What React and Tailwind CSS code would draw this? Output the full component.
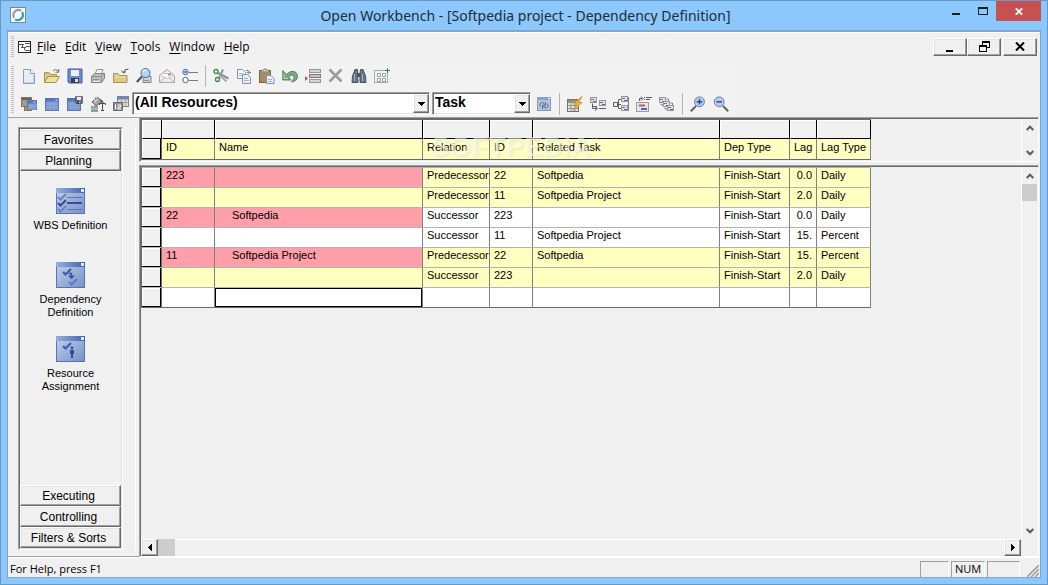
const COLS = ["w-[20px]", "w-[53px]", "w-[208px]", "w-[67px]", "w-[43px]", "w-[187px]", "w-[70px]", "w-[27px]", "w-[54px]"];
const HEADERS = ["ID", "Name", "Relation", "ID", "Related Task", "Dep Type", "Lag", "Lag Type"];

const ROWS = [
  { id: "223", name: "", head: true, band: true, rel: "Predecessor", relId: "22", task: "Softpedia", dep: "Finish-Start", lag: "0.0", type: "Daily" },
  { id: "", name: "", band: true, rel: "Predecessor", relId: "11", task: "Softpedia Project", dep: "Finish-Start", lag: "2.0", type: "Daily" },
  { id: "22", name: "Softpedia", head: true, rel: "Successor", relId: "223", task: "", dep: "Finish-Start", lag: "0.0", type: "Daily" },
  { id: "", name: "", rel: "Successor", relId: "11", task: "Softpedia Project", dep: "Finish-Start", lag: "15.", type: "Percent" },
  { id: "11", name: "Softpedia Project", head: true, band: true, rel: "Predecessor", relId: "22", task: "Softpedia", dep: "Finish-Start", lag: "15.", type: "Percent" },
  { id: "", name: "", band: true, rel: "Successor", relId: "223", task: "", dep: "Finish-Start", lag: "2.0", type: "Daily" },
  { id: "", name: "", last: true, rel: "", relId: "", task: "", dep: "", lag: "", type: "" },
];

const MENUS = ["File", "Edit", "View", "Tools", "Window", "Help"];

const RAISED = "border border-t-white border-l-white border-r-[#696969] border-b-[#696969] shadow-[inset_-1px_-1px_0_#a0a0a0,inset_1px_1px_0_#e3e3e3] bg-[#f0f0f0]";

/* ---------- toolbar icons ---------- */

function Svg({ children }) {
  return (
    <svg viewBox="0 0 16 16" className="block h-4 w-4" fill="none" aria-hidden="true">
      {children}
    </svg>
  );
}

const MiniWindow = ({ x = 1, y = 2, w = 14, h = 12, fill = "#7c98d2", bar = "#5475ba" }) => (
  <g>
    <rect x={x} y={y} width={w} height={h} fill={fill} stroke="#5c79b4" strokeWidth="1" />
    <rect x={x} y={y} width={w} height="3" fill={bar} />
    <rect x={x + w - 3} y={y + 1} width="2" height="1" fill="#e4ecfa" />
    <path
      d={`M${x + 1} ${y + 5.5}H${x + w - 1}M${x + 1} ${y + 8.5}H${x + w - 1}M${x + 4.5} ${y + 3}V${y + h - 1}M${x + 8.5} ${y + 3}V${y + h - 1}`}
      stroke="#93abdc"
    />
  </g>
);

const Floppy = ({ x, y, s, a, b }) => (
  <g transform={`translate(${x} ${y}) scale(${s})`}>
    <path d="M0 0H14V14H1L0 13Z" fill={a} stroke={b} />
    <rect x="3" y="1" width="8" height="6" fill="#e8eefa" />
    <rect x="3" y="9" width="8" height="5" fill="#3e3e46" />
    <rect x="7" y="10" width="3" height="3" fill="#dde" />
  </g>
);

const Task = ({ x, y }) => (
  <g>
    <rect x={x + 0.5} y={y + 0.5} width="6" height="5" fill="#dfe3ea" stroke="#9298a2" />
    <path d={`M${x + 1} ${y + 2.5}H${x + 4}`} stroke="#c9505c" />
    <path d={`M${x + 3} ${y + 4.5}H${x + 6}`} stroke="#4c6ab8" />
  </g>
);

const ICONS = {
  new: (
    <>
      <path d="M2.5 1.5H9.5L13.5 5.5V15.5H2.5Z" fill="#e6eefa" stroke="#8e9cb6" />
      <path d="M9.5 1.5V5.5H13.5" fill="#fff" stroke="#8e9cb6" />
      <path d="M12.5 7V14.5H4" stroke="#c3d0e8" />
    </>
  ),
  open: (
    <>
      <path d="M0.5 14.5V4.5H5L6.5 6.5H12.5V9" fill="#d8c884" stroke="#a8954c" />
      <path d="M0.5 14.5L4 8.5H15.5L12 14.5Z" fill="#efe0a0" stroke="#a8954c" />
      <path d="M9 3Q12 0 14 3.5M14.7 1V4.2H11.5" stroke="#64704c" />
    </>
  ),
  save: <Floppy x={1} y={1} s={1} a="#6c8cca" b="#44609c" />,
  print: (
    <>
      <path d="M5 6L7 1.5H13L11.5 6" fill="#fafafa" stroke="#8d9298" />
      <path d="M1.5 8.5L4.5 5.5H14.5V10.5L11.5 14.5H1.5Z" fill="#b9bdc0" stroke="#7c8184" />
      <path d="M1.5 8.5H11.5V14.5M11.5 8.5L14.5 5.5" stroke="#8a8f92" />
      <path d="M3 11.5H9" stroke="#6cab6c" />
      <path d="M3 13.5H10M7.5 3.5H11" stroke="#ebeef0" />
    </>
  ),
  folderUp: (
    <>
      <path d="M0.5 14.5V5.5H5L6.5 7.5H14V14.5Z" fill="#dccb84" stroke="#a8954c" />
      <path d="M2 9H13" stroke="#f1e5b4" />
      <path d="M15.5 1Q11 1 10.5 4.5M8.5 2.5L10.5 5L13 3.5" stroke="#4e5c38" />
    </>
  ),
  preview: (
    <>
      <path d="M7 11L9 8.5H15V14.5H7Z" fill="#cfd4d2" stroke="#7e8583" />
      <circle cx="9.5" cy="5" r="4.5" fill="#b9d2f6" stroke="#4a67a6" />
      <path d="M6.5 4Q7.5 2 10 2" stroke="#fff" strokeWidth="1.4" />
      <path d="M6 8.5L0.8 14" stroke="#4c4c50" strokeWidth="2" />
      <path d="M8 12.5H13" stroke="#6cab6c" />
    </>
  ),
  mail: (
    <>
      <path d="M0.5 7.5L8 1.5L15.5 7.5V14.5H0.5Z" fill="#eceeec" stroke="#a6aaa8" />
      <path d="M2.5 8V5.5H13.5V8L8 10.5Z" fill="#fff" stroke="#c3c6c4" />
      <path d="M0.5 14.5L6 10M15.5 14.5L10 10" stroke="#b4b8b6" />
      <rect x="9" y="6" width="3" height="1.5" fill="#cf7478" />
    </>
  ),
  options: (
    <>
      <circle cx="3.5" cy="4" r="2.7" fill="#e2eaf8" stroke="#49619a" />
      <circle cx="3.5" cy="4" r="1.2" fill="#49619a" />
      <circle cx="3.5" cy="12" r="2.7" fill="#fff" stroke="#49619a" />
      <path d="M7 4.5H16M7 12.5H16" stroke="#7c7c7c" />
    </>
  ),
  cut: (
    <>
      <path d="M5 5L15.5 10.5M6 10L10 1.5" stroke="#8c9196" strokeWidth="2" />
      <path d="M7 7.5L13.5 13.5" stroke="#a4a9ae" strokeWidth="2" />
      <circle cx="3" cy="3.5" r="2" stroke="#3f8a50" strokeWidth="1.4" />
      <circle cx="4.5" cy="11.5" r="2" stroke="#3f8a50" strokeWidth="1.4" />
    </>
  ),
  copy: (
    <>
      <path d="M1.5 1.5H6.5L9.5 4.5V10.5H1.5Z" fill="#f2f6fc" stroke="#8794ae" />
      <path d="M6.5 6.5H11.5L14.5 9.5V15.5H6.5Z" fill="#e7eefa" stroke="#8794ae" />
      <path d="M3 5.5H7M3 7.5H6M8 10.5H12M8 12.5H13" stroke="#a8b5cf" />
      <path d="M10 2.5Q13 1.5 13 5M11 4L13 5.5L15 4" stroke="#6a7078" />
    </>
  ),
  paste: (
    <>
      <rect x="0.5" y="2.5" width="11" height="12" fill="#a98c5a" stroke="#7d6640" />
      <path d="M3 4V2H4.5L5.5 0.8H7L8 2H9.5V4Z" fill="#c9ccd0" stroke="#84878a" />
      <path d="M7.5 7.5H12L15 10.5V15.5H7.5Z" fill="#eaf0fa" stroke="#8190ae" />
      <path d="M9 11.5H13M9 13.5H13" stroke="#9cb0d6" />
    </>
  ),
  undo: (
    <>
      <path d="M0.8 2.5V12H9L6.5 9Q10 5.5 12 8Q13 10 9.5 14Q15.5 13 15.5 8Q14.5 2.5 9 3.5Q6 4.5 4.5 6.5Z" fill="#77a983" stroke="#4d7b5a" strokeWidth="0.9" />
      <path d="M2 5.5V10.5H6" stroke="#b5d6bc" />
    </>
  ),
  insertRow: (
    <>
      <rect x="4.5" y="1.5" width="11" height="3" fill="#d4d4d4" stroke="#969696" />
      <rect x="4.5" y="6.5" width="11" height="3" fill="#c4c4c4" stroke="#7c7c7c" />
      <rect x="4.5" y="11.5" width="11" height="3" fill="#d4d4d4" stroke="#969696" />
      <path d="M0 8L3.2 10.5L0 13Z" fill="#c05a66" />
    </>
  ),
  remove: <path d="M1.5 1.5L13.5 13.5M13.5 1.5L1.5 13.5" stroke="#9c9c9c" strokeWidth="2.8" />,
  find: (
    <>
      <path d="M4 1.5H6.5V5L7 14.5H1L1.5 8Z" fill="#66748a" stroke="#4a5666" />
      <path d="M9.5 1.5H12L14.5 8L15 14.5H9V5Z" fill="#66748a" stroke="#4a5666" />
      <rect x="6.5" y="5" width="3" height="4" fill="#4a5566" />
      <path d="M3.5 6V13M11.5 6V13" stroke="#a6b2c4" />
    </>
  ),
  select: (
    <>
      <rect x="0.5" y="2.5" width="13" height="12" stroke="#3e7a4a" strokeDasharray="1 1" />
      <path d="M3.5 5.5H6.5V8.5H3.5ZM8.5 5.5H11.5V8.5H8.5ZM3.5 10.5H6.5V13.5H3.5ZM8.5 10.5H11.5V13.5H8.5Z" fill="#fff" stroke="#9a9f9a" />
      <path d="M13.5 0V5M11 2.5H16" stroke="#3e7a4a" />
    </>
  ),
  windows: (
    <>
      <rect x="0.5" y="1.5" width="10" height="9" fill="#a09a8e" stroke="#7c766a" />
      <path d="M1 3H10" stroke="#6a655c" strokeWidth="2" />
      <rect x="3.5" y="10.5" width="7" height="4" fill="#b09860" stroke="#86734a" />
      <MiniWindow x={6.5} y={4.5} w={9} h={9} />
    </>
  ),
  view: <MiniWindow x={1.5} y={2.5} w={13} h={12} />,
  saveView: (
    <>
      <MiniWindow x={0.5} y={2.5} w={13} h={12} />
      <Floppy x={8.5} y={0.5} s={0.5} a="#6c6c70" b="#3c3c40" />
    </>
  ),
  format: (
    <>
      <path d="M2 6L7 1L12 5L6 10Z" fill="#a4a7aa" stroke="#5c5c5e" />
      <path d="M5 5Q3 0 7.5 1.5M3.5 7L8 3" stroke="#dcdcdc" />
      <path d="M11 4L13 7" stroke="#4c4c4e" strokeWidth="1.5" />
      <path d="M1 11H8" stroke="#c84c50" strokeWidth="1.3" />
      <path d="M1 13H8" stroke="#58a860" strokeWidth="1.3" />
      <path d="M1 15H8" stroke="#4c6ab8" strokeWidth="1.3" />
      <path d="M9.5 9V7.5H15.5V9M12.5 7.5V14.5M11 14.5H14" stroke="#48484a" />
    </>
  ),
  calendar: (
    <>
      <rect x="4.5" y="0.5" width="11" height="10" fill="#d8dbd8" stroke="#7c8694" />
      <rect x="5" y="1" width="10" height="2.5" fill="#6d87bb" />
      <path d="M8.5 4V9M12.5 4V10M5 6.5H15" stroke="#b3a678" />
      <path d="M0.5 6.5H9.5V14.5H0.5Z" fill="#8e9198" stroke="#676a72" />
      <path d="M2.5 8.5V13M4.5 9H7.5V11H5V13H8" stroke="#fff" />
    </>
  ),
  refresh: (
    <>
      <rect x="1.5" y="1.5" width="13" height="13" fill="#b4c4e0" stroke="#8095c0" />
      <rect x="1" y="1" width="14" height="3" fill="#8aa1ce" />
      <rect x="12" y="2" width="2" height="1" fill="#fff" />
      <path d="M4.5 10.5Q3 6.5 6.5 6.5L8.5 8M11.5 7.5Q13 12 9.5 12L7.5 10.5M9.5 6V9H6.5M6.5 13V10H9.5" stroke="#5a6880" />
    </>
  ),
  schedule: (
    <>
      <rect x="0.5" y="3.5" width="11" height="12" fill="#dfe3d4" stroke="#737862" />
      <rect x="1" y="4" width="10" height="3" fill="#8a9a78" />
      <path d="M4 7V15M8 7V15M1 9.5H11M1 12.5H11" stroke="#8f95a4" />
      <path d="M15 0.5L6.5 8H10L6 14.5L15 6.5H11.5Z" fill="#f6b73a" stroke="#d08a24" strokeWidth="0.8" />
    </>
  ),
  link: (
    <>
      <Task x={0} y={1} />
      <Task x={9} y={4} />
      <path d="M2.5 7.5V12.5H7M5 10.5L7.5 12.5L5 14.5M9 12.5H16M3 10.5H7" stroke="#5b5f5b" />
    </>
  ),
  wbs: (
    <>
      <Task x={8} y={0} />
      <Task x={8} y={9} />
      <path d="M8 3.5H5.5V12.5H8M0.5 6.5H4.5V10.5H0.5ZM5 8.5H8" stroke="#5b5f5b" />
      <path d="M15.5 1V15" stroke="#7c807c" />
    </>
  ),
  level: (
    <>
      <rect x="0.5" y="6.5" width="12" height="9" fill="#e4e5e8" stroke="#9a9ca0" />
      <path d="M3 9.5H9" stroke="#c9505c" strokeWidth="2" />
      <path d="M5 13H11" stroke="#4c6ab8" strokeWidth="2" />
      <path d="M3.5 5V2.5H6M5 0.5L7 2.5L5 4.5M8 1.5H9M10 1.5H16M8 3.5H9M10 3.5H14" stroke="#55585a" />
    </>
  ),
  cascade: (
    <>
      <Task x={0} y={1} />
      <Task x={4} y={5} />
      <Task x={8} y={9} />
      <path d="M7.5 3H9.5V5M11.5 7H13.5V9M2 7.5V9H4M6 11.5V13H8" stroke="#7c807c" />
    </>
  ),
  zoomIn: (
    <>
      <path d="M6 10L0.8 15.2" stroke="#606468" strokeWidth="2" />
      <circle cx="9.5" cy="5.8" r="4.9" fill="#b8cdf2" stroke="#6b7ca8" />
      <path d="M9.5 3V8.6M6.7 5.8H12.3" stroke="#34488c" strokeWidth="1.5" />
    </>
  ),
  zoomOut: (
    <>
      <path d="M10 10L15.2 15.2" stroke="#606468" strokeWidth="2" />
      <circle cx="6.2" cy="5.8" r="4.9" fill="#b8cdf2" stroke="#6b7ca8" />
      <path d="M3.4 5.8H9" stroke="#34488c" strokeWidth="1.5" />
    </>
  ),
};

function Tool({ name }) {
  return (
    <button type="button" aria-label={name} className="h-4 w-4 shrink-0">
      <Svg>{ICONS[name]}</Svg>
    </button>
  );
}

const Sep = () => <span className="h-[22px] w-px shrink-0 bg-[#b4b4b4]" />;

const Grip = ({ className }) => (
  <span className={`w-[3px] shrink-0 bg-[repeating-linear-gradient(to_bottom,#bdbdbd_0_1px,transparent_1px_2px)] ${className}`} />
);

function Combo({ label, options, className }) {
  return (
    <div className={`relative h-[23px] border border-t-[#a0a0a0] border-l-[#a0a0a0] border-r-white border-b-white bg-white shadow-[inset_1px_1px_0_#696969,inset_-1px_-1px_0_#e3e3e3] ${className}`}>
      <select
        aria-label={label}
        className="block h-full w-full appearance-none bg-transparent pb-[3px] pl-[2px] font-['Liberation_Sans',sans-serif] text-[14px] leading-[18px] font-bold text-black outline-none"
      >
        {options.map((o) => (
          <option key={o}>{o}</option>
        ))}
      </select>
      <span className={`pointer-events-none absolute top-[1px] right-0 bottom-[1px] grid w-4 place-items-center ${RAISED}`}>
        <svg viewBox="0 0 7 4" className="h-1 w-[7px]" shapeRendering="crispEdges">
          <path d="M0 0H7L3.5 4Z" fill="#000" />
        </svg>
      </span>
    </div>
  );
}

/* ---------- sidebar ---------- */

const TICK = "M0 3L2.5 5.5L8 0";

function PageIcon({ kind }) {
  return (
    <svg viewBox="0 0 29 26" className="block h-[26px] w-[29px]" fill="none" aria-hidden="true">
      <defs>
        <linearGradient id={`page-${kind}`} x1="0" y1="0" x2="1" y2="1">
          <stop offset="0" stopColor="#c6d0e8" />
          <stop offset="1" stopColor="#7690c6" />
        </linearGradient>
        <linearGradient id={`bar-${kind}`}>
          <stop offset="0" stopColor="#9aafda" />
          <stop offset="1" stopColor="#3f64ae" />
        </linearGradient>
      </defs>
      <rect x="0.5" y="0.5" width="28" height="25" fill={`url(#page-${kind})`} stroke="#5375b7" />
      <rect x="0" y="0" width="29" height="5" fill={`url(#bar-${kind})`} />
      <rect x="25" y="1" width="3" height="3" fill="#dfe8f8" />
      {kind === "wbs" && (
        <>
          <g strokeWidth="2">
            <path d={TICK} transform="translate(2 6)" stroke="#6684c0" />
            <path d={TICK} transform="translate(2 12)" stroke="#2a509e" />
            <path d={TICK} transform="translate(2 18)" stroke="#6684c0" />
          </g>
          <path d="M11 9.5H26M11 21.5H26" stroke="#5376b8" />
          <path d="M11 15H26" stroke="#2a509e" strokeWidth="2" />
        </>
      )}
      {kind === "dep" && (
        <>
          <path d={TICK} transform="translate(7 7)" stroke="#3a5fac" strokeWidth="2.2" />
          <path d="M13 11.5H15.5V16M13 13.5L15.5 16L18 13.5" stroke="#2a509e" strokeWidth="1.4" />
          <path d={TICK} transform="translate(13 17)" stroke="#5c7cc0" strokeWidth="2.2" />
        </>
      )}
      {kind === "res" && (
        <>
          <path d={TICK} transform="translate(7 7)" stroke="#3a5fac" strokeWidth="2.2" />
          <circle cx="16" cy="12" r="1.4" fill="#2a509e" />
          <path d="M14 14H18V18H17V22H15V18H14Z" fill="#2a509e" />
        </>
      )}
    </svg>
  );
}

const PAGES = [
  { kind: "wbs", lines: ["WBS Definition"] },
  { kind: "dep", lines: ["Dependency", "Definition"] },
  { kind: "res", lines: ["Resource", "Assignment"] },
];

const SideButton = ({ children }) => (
  <button type="button" className={`block h-[21px] w-full pr-1 text-[12px] leading-[18px] ${RAISED}`}>
    {children}
  </button>
);

function Sidebar() {
  return (
    <aside className="flex w-[131px] shrink-0 border-t border-b border-[#a0a0a0] pt-[9px] pb-[6px] pl-[10px]">
      <div className="flex w-[105px] flex-col border border-t-[#a0a0a0] border-l-[#a0a0a0] border-r-white border-b-white">
        <div className="flex flex-1 flex-col border border-t-[#696969] border-l-[#696969] border-r-[#e3e3e3] border-b-[#e3e3e3]">
          <SideButton>Favorites</SideButton>
          <SideButton>Planning</SideButton>
          <nav className="flex flex-1 flex-col items-center gap-[17px] pt-[17px]">
            {PAGES.map((p) => (
              <button key={p.kind} type="button" className="flex min-h-[57px] flex-col items-center gap-[5px] text-[11px] leading-[13px]">
                <PageIcon kind={p.kind} />
                <span>
                  {p.lines.map((l) => (
                    <span key={l} className="block">{l}</span>
                  ))}
                </span>
              </button>
            ))}
          </nav>
          <SideButton>Executing</SideButton>
          <SideButton>Controlling</SideButton>
          <SideButton>Filters &amp; Sorts</SideButton>
        </div>
      </div>
      <div className="ml-auto w-1 border-l border-white" />
    </aside>
  );
}

/* ---------- grid ---------- */

const TABLE = "w-[730px] shrink-0 self-start table-fixed border-separate border-spacing-0 border-l border-l-[#696969] text-left text-[11px]";

const Cols = () => (
  <colgroup>
    {COLS.map((w, i) => (
      <col key={i} className={w} />
    ))}
  </colgroup>
);

const Stub = ({ className }) => (
  <div className={`bg-[#f0f0f0] shadow-[inset_-1px_-1px_0_#000,inset_1px_1px_0_#fff] ${className}`} />
);

function HeaderTable() {
  return (
    <table className={`${TABLE} border-t border-t-[#696969]`}>
      <Cols />
      <thead>
        <tr className="h-[19px]">
          {COLS.map((_, i) => (
            <td key={i} className="border-r border-r-black p-0">
              <div className="h-[19px] border-t border-l border-b border-t-white border-l-white border-b-black bg-[#f0f0f0]" />
            </td>
          ))}
        </tr>
        <tr className="h-[21px]">
          <td className="border-r border-b border-[#696969] p-0">
            <Stub className="h-5" />
          </td>
          {HEADERS.map((h, i) => (
            <th key={i} scope="col" className="border-r border-b border-r-[#808080] border-b-[#696969] bg-[#ffffc0] p-0 pl-1 align-top leading-4 font-normal whitespace-nowrap">
              {h}
            </th>
          ))}
        </tr>
      </thead>
    </table>
  );
}

function BodyTable() {
  return (
    <table className={`${TABLE} border-t border-t-[#b4b4b4]`}>
      <Cols />
      <tbody>
        {ROWS.map((r, i) => {
          const line = r.last ? "border-b-[#696969]" : "border-b-[#b4b4b4]";
          const cell = `h-5 border-r border-b border-r-[#808080] ${line} p-0 pl-1 align-top leading-[15px] whitespace-nowrap overflow-hidden`;
          const bg = r.band ? "bg-[#ffffc0]" : "bg-white";
          const left = r.head ? "bg-[#ff9fa9]" : bg;
          return (
            <tr key={i}>
              <td className={`border-r border-b border-r-[#696969] ${line} p-0`}>
                <Stub className="h-[19px]" />
              </td>
              <td className={`${cell} ${left}`}>{r.id}</td>
              <td className={`${cell} ${left} ${r.last ? "shadow-[inset_0_0_0_1px_#000]" : ""}`}>
                <span className="pl-[13px]">{r.name}</span>
              </td>
              <td className={`${cell} ${bg}`}>{r.rel}</td>
              <td className={`${cell} ${bg}`}>{r.relId}</td>
              <td className={`${cell} ${bg}`}>{r.task}</td>
              <td className={`${cell} ${bg}`}>{r.dep}</td>
              <td className={`${cell} ${bg} pr-1 text-right`}>{r.lag}</td>
              <td className={`${cell} ${bg}`}>{r.type}</td>
            </tr>
          );
        })}
      </tbody>
    </table>
  );
}

const Chevron = ({ down }) => (
  <button type="button" aria-label={down ? "Scroll down" : "Scroll up"} className="grid h-[17px] w-[15px] shrink-0 place-items-center">
    <svg viewBox="0 0 8 6" className="h-[6px] w-2" fill="none">
      <path d={down ? "M0.7 1L4 4.3L7.3 1" : "M0.7 5L4 1.7L7.3 5"} stroke="#5c5c5c" strokeWidth="2" />
    </svg>
  </button>
);

const HArrow = ({ right }) => (
  <button type="button" aria-label={right ? "Scroll right" : "Scroll left"} className={`grid h-[17px] w-[17px] shrink-0 place-items-center ${RAISED}`}>
    <svg viewBox="0 0 4 7" className="h-[7px] w-1" shapeRendering="crispEdges">
      <path d={right ? "M0 0L4 3.5L0 7Z" : "M4 0L0 3.5L4 7Z"} fill="#000" />
    </svg>
  </button>
);

const PANE = "flex border border-t-[#a0a0a0] border-l-[#a0a0a0] border-r-white border-b-white";
const PANE_IN = "flex min-w-0 flex-1 border-t border-l border-[#696969]";

function Grid() {
  return (
    <main className="flex min-w-0 flex-1 flex-col gap-[3px] pr-px">
      <div className={`relative h-[45px] shrink-0 ${PANE}`}>
        <div className={PANE_IN}>
          <div className="flex min-w-0 flex-1 overflow-hidden">
            <HeaderTable />
          </div>
          <div className="flex w-[17px] shrink-0 flex-col justify-between border-l border-white">
            <Chevron />
            <Chevron down />
          </div>
        </div>
        <span className="pointer-events-none absolute top-[13px] left-[291px] flex text-[28px] leading-8 font-bold text-white/50 [text-shadow:1px_1px_2px_rgba(120,120,100,0.16)]">
          SOFTPEDIA
          <span className="text-[9px] leading-3">®</span>
        </span>
      </div>
      <div className={`min-h-0 flex-1 ${PANE}`}>
        <div className={`${PANE_IN} flex-col`}>
          <div className="flex min-h-0 flex-1">
            <div className="flex min-w-0 flex-1 overflow-hidden">
              <BodyTable />
            </div>
            <div className="flex w-[17px] shrink-0 flex-col border-l border-white">
              <Chevron />
              <span className="h-[17px] w-[15px] bg-[#cdcdcd]" />
              <span className="flex-1" />
              <Chevron down />
            </div>
          </div>
          <div className="flex h-[17px] shrink-0 pr-[17px]">
            <HArrow />
            <span className="h-full w-[17px] bg-[#cdcdcd]" />
            <span className="flex-1 border-t border-white" />
            <HArrow right />
          </div>
        </div>
      </div>
    </main>
  );
}

/* ---------- window ---------- */

function TitleBar() {
  return (
    <header className="grid h-[29px] shrink-0 grid-cols-[1fr_auto_1fr] pr-[6px] pl-[9px]">
      <svg viewBox="0 0 16 16" className="mt-[6px] h-4 w-4" fill="none">
        <rect x="0.5" y="0.5" width="15" height="15" fill="#fff" stroke="#7a8894" />
        <path d="M4 11Q2 6 6 3.5Q9 2 11 4" stroke="#9a9ea2" strokeWidth="2.2" />
        <path d="M12 5Q14.5 9 11 12Q8 14 5 12.5" stroke="#2f9bd2" strokeWidth="2.2" />
      </svg>
      <h1 className="font-['Noto_Sans',sans-serif] text-[14px] leading-[29px] text-[#1e2b38]">
        Open Workbench - [Softpedia project - Dependency Definition]
      </h1>
      <div className="flex justify-end">
        <button type="button" aria-label="Minimize" className="grid h-5 w-[27px] place-items-center">
          <svg viewBox="0 0 10 10" className="h-[10px] w-[10px]" shapeRendering="crispEdges">
            <rect x="1" y="7" width="8" height="2" fill="#1c1c1c" />
          </svg>
        </button>
        <button type="button" aria-label="Maximize" className="grid h-5 w-[27px] place-items-center">
          <svg viewBox="0 0 10 8" className="h-2 w-[10px]" shapeRendering="crispEdges">
            <path d="M0 0H10V8H0ZM1 2V7H9V2Z" fill="#1c1c1c" fillRule="evenodd" />
          </svg>
        </button>
        <button type="button" aria-label="Close" className="grid h-5 w-[45px] place-items-center bg-[#c75050]">
          <svg viewBox="0 0 8 7" className="h-[7px] w-2" fill="none">
            <path d="M0.8 0.3L7.2 6.7M7.2 0.3L0.8 6.7" stroke="#fff" strokeWidth="1.9" />
          </svg>
        </button>
      </div>
    </header>
  );
}

function MenuBar() {
  return (
    <div className="flex h-[29px] items-center pr-[3px] pb-[2px] pl-[3px]">
      <Grip className="h-[22px]" />
      <svg viewBox="0 0 13 12" className="ml-[4px] h-3 w-[13px]" fill="none" shapeRendering="crispEdges">
        <rect x="0.5" y="0.5" width="12" height="11" fill="#fff" stroke="#222" />
        <path d="M1 3.5H6M4.5 3.5V6M7 2.5H12M3 6.5H8M6.5 6V9M8 5.5H12M7 9.5H12" stroke="#555" />
      </svg>
      <nav className="ml-[2px] flex gap-px text-[12px]">
        {MENUS.map((m) => (
          <button key={m} type="button" className="px-1">
            <span className="underline underline-offset-2">{m[0]}</span>
            {m.slice(1)}
          </button>
        ))}
      </nav>
      <div className="ml-auto flex">
        <button type="button" aria-label="Minimize document" className={`grid h-[18px] w-[34px] place-items-center ${RAISED}`}>
          <svg viewBox="0 0 10 10" className="h-[10px] w-[10px]" shapeRendering="crispEdges">
            <rect x="1" y="8" width="7" height="2" fill="#000" />
          </svg>
        </button>
        <button type="button" aria-label="Restore document" className={`mr-[2px] grid h-[18px] w-[34px] place-items-center ${RAISED}`}>
          <svg viewBox="0 0 11 11" className="h-[11px] w-[11px]" shapeRendering="crispEdges" fill="none">
            <path d="M3.5 0V7M3 6.5H11M10.5 0V7" stroke="#000" />
            <path d="M3 1H11" stroke="#000" strokeWidth="2" />
            <path d="M0.5 4.5H7.5V10.5H0.5Z" fill="#f0f0f0" stroke="#000" />
            <path d="M0 5H8" stroke="#000" strokeWidth="2" />
          </svg>
        </button>
        <button type="button" aria-label="Close document" className={`grid h-[18px] w-[34px] place-items-center ${RAISED}`}>
          <svg viewBox="0 0 10 9" className="h-[9px] w-[10px]" fill="none">
            <path d="M1 0.5L9 8.5M9 0.5L1 8.5" stroke="#000" strokeWidth="2" />
          </svg>
        </button>
      </div>
    </div>
  );
}

function ToolBars() {
  return (
    <div className="flex w-[730px] items-center bg-[#f2f2f2] pl-[3px]">
      <Grip className="h-[48px]" />
      <div className="ml-[7px] flex flex-col">
        <div className="flex h-7 items-center gap-[7px]">
          {["new", "open", "save", "print", "folderUp", "preview", "mail", "options"].map((n) => (
            <Tool key={n} name={n} />
          ))}
          <Sep />
          {["cut", "copy", "paste", "undo", "insertRow", "remove", "find", "select"].map((n) => (
            <Tool key={n} name={n} />
          ))}
        </div>
        <div className="flex h-[27px] items-center gap-[7px]">
          {["windows", "view", "saveView", "format", "calendar"].map((n) => (
            <Tool key={n} name={n} />
          ))}
          <div className="-mr-[2px] -ml-1 flex gap-[2px]">
            <Combo label="Resource filter" options={["(All Resources)"]} className="w-[298px]" />
            <Combo label="Level" options={["Task", "Phase", "Activity"]} className="w-[99px]" />
          </div>
          <Tool name="refresh" />
          <Sep />
          {["schedule", "link", "wbs", "level", "cascade"].map((n) => (
            <Tool key={n} name={n} />
          ))}
          <Sep />
          <Tool name="zoomIn" />
          <Tool name="zoomOut" />
        </div>
      </div>
    </div>
  );
}

const STATUS_BOX = "h-4 border-t border-l border-[#a0a0a0] border-r border-r-white text-center leading-[14px]";

function StatusBar() {
  return (
    <footer className="flex h-5 shrink-0 items-end border-t border-white pr-px pl-[2px] text-[11px]">
      <span className="leading-4">For Help, press F1</span>
      <div className="ml-auto flex gap-[2px]">
        <span className={`${STATUS_BOX} w-[29px]`} />
        <span className={`${STATUS_BOX} w-[34px]`}>NUM</span>
        <span className={`${STATUS_BOX} w-[33px]`} />
      </div>
      <svg viewBox="0 0 12 12" className="ml-[7px] h-3 w-3" fill="none">
        <path d="M0 12L12 0M4 12L12 4M8 12L12 8" stroke="#a0a0a0" strokeWidth="1.6" />
      </svg>
    </footer>
  );
}

export default function App() {
  return (
    <div className="flex h-screen flex-col border border-[#6a98c4] bg-[#8cc8fb] pb-[6px] font-['Open_Sans',sans-serif] text-black">
      <TitleBar />
      <div className="mx-[6px] flex min-h-0 flex-1 flex-col border border-t-2 border-[#7fa8d0] bg-[#f0f0f0]">
        <div className="shrink-0 border-t border-white">
          <MenuBar />
          <ToolBars />
        </div>
        <div className="flex min-h-0 flex-1 font-['Liberation_Sans',Arial,sans-serif]">
          <Sidebar />
          <Grid />
        </div>
        <StatusBar />
      </div>
    </div>
  );
}
